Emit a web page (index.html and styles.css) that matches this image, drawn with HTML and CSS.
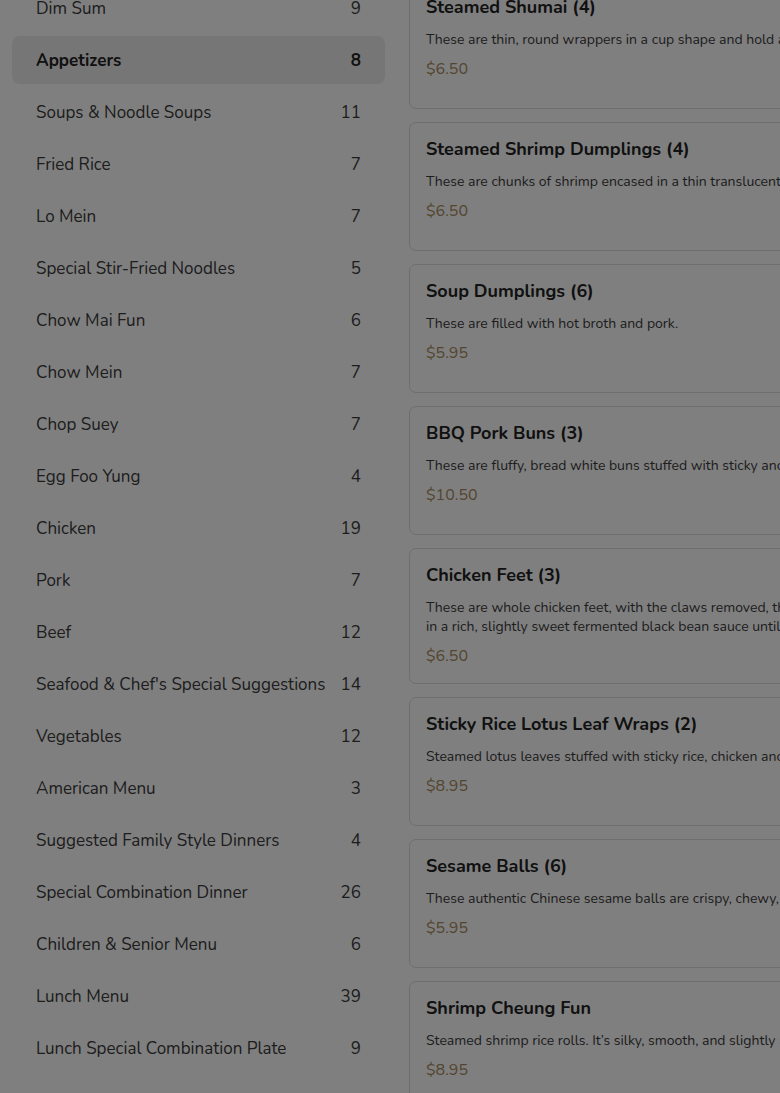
FILE: index.html
```html
<!DOCTYPE html>
<html lang="en">
<head>
<meta charset="utf-8">
<title>Menu</title>
<link rel="stylesheet" href="styles.css">
</head>
<body>
<div class="page">
  <nav class="sidebar">
    <div class="cat"><span class="cat-name">Dim Sum</span><span class="cat-count">9</span></div>
    <div class="cat active"><span class="cat-name">Appetizers</span><span class="cat-count">8</span></div>
    <div class="cat"><span class="cat-name">Soups &amp; Noodle Soups</span><span class="cat-count">11</span></div>
    <div class="cat"><span class="cat-name">Fried Rice</span><span class="cat-count">7</span></div>
    <div class="cat"><span class="cat-name">Lo Mein</span><span class="cat-count">7</span></div>
    <div class="cat"><span class="cat-name">Special Stir-Fried Noodles</span><span class="cat-count">5</span></div>
    <div class="cat"><span class="cat-name">Chow Mai Fun</span><span class="cat-count">6</span></div>
    <div class="cat"><span class="cat-name">Chow Mein</span><span class="cat-count">7</span></div>
    <div class="cat"><span class="cat-name">Chop Suey</span><span class="cat-count">7</span></div>
    <div class="cat"><span class="cat-name">Egg Foo Yung</span><span class="cat-count">4</span></div>
    <div class="cat"><span class="cat-name">Chicken</span><span class="cat-count">19</span></div>
    <div class="cat"><span class="cat-name">Pork</span><span class="cat-count">7</span></div>
    <div class="cat"><span class="cat-name">Beef</span><span class="cat-count">12</span></div>
    <div class="cat"><span class="cat-name">Seafood &amp; Chef's Special Suggestions</span><span class="cat-count">14</span></div>
    <div class="cat"><span class="cat-name">Vegetables</span><span class="cat-count">12</span></div>
    <div class="cat"><span class="cat-name">American Menu</span><span class="cat-count">3</span></div>
    <div class="cat"><span class="cat-name">Suggested Family Style Dinners</span><span class="cat-count">4</span></div>
    <div class="cat"><span class="cat-name">Special Combination Dinner</span><span class="cat-count">26</span></div>
    <div class="cat"><span class="cat-name">Children &amp; Senior Menu</span><span class="cat-count">6</span></div>
    <div class="cat"><span class="cat-name">Lunch Menu</span><span class="cat-count">39</span></div>
    <div class="cat"><span class="cat-name">Lunch Special Combination Plate</span><span class="cat-count">9</span></div>
    <div class="cat"><span class="cat-name">Lunch Special Salads</span><span class="cat-count">3</span></div>
  </nav>
  <main class="items">
    <div class="card">
      <h3 class="card-title">Steamed Shumai (4)</h3>
      <p class="card-desc">These are thin, round wrappers in a cup shape and hold a filling.</p>
      <div class="card-price">$6.50</div>
    </div>
    <div class="card">
      <h3 class="card-title">Steamed Shrimp Dumplings (4)</h3>
      <p class="card-desc">These are chunks of shrimp encased in a thin translucent wrapper.</p>
      <div class="card-price">$6.50</div>
    </div>
    <div class="card">
      <h3 class="card-title">Soup Dumplings (6)</h3>
      <p class="card-desc">These are filled with hot broth and pork.</p>
      <div class="card-price">$5.95</div>
    </div>
    <div class="card">
      <h3 class="card-title">BBQ Pork Buns (3)</h3>
      <p class="card-desc">These are fluffy, bread white buns stuffed with sticky and sweet pork.</p>
      <div class="card-price">$10.50</div>
    </div>
    <div class="card">
      <h3 class="card-title">Chicken Feet (3)</h3>
      <p class="card-desc">These are whole chicken feet, with the claws removed, that are fried, then stewed<br>in a rich, slightly sweet fermented black bean sauce until tender.</p>
      <div class="card-price">$6.50</div>
    </div>
    <div class="card">
      <h3 class="card-title">Sticky Rice Lotus Leaf Wraps (2)</h3>
      <p class="card-desc">Steamed lotus leaves stuffed with sticky rice, chicken and sausage.</p>
      <div class="card-price">$8.95</div>
    </div>
    <div class="card">
      <h3 class="card-title">Sesame Balls (6)</h3>
      <p class="card-desc">These authentic Chinese sesame balls are crispy, chewy, and sweet.</p>
      <div class="card-price">$5.95</div>
    </div>
    <div class="card">
      <h3 class="card-title">Shrimp Cheung Fun</h3>
      <p class="card-desc">Steamed shrimp rice rolls. It’s silky, smooth, and slightly sweet.</p>
      <div class="card-price">$8.95</div>
    </div>
  </main>
</div>
<div class="overlay"></div>
</body>
</html>
```
FILE: styles.css
```css
html, body {
  margin: 0;
  padding: 0;
  background: #ffffff;
  overflow: hidden;
  height: 100%;
}

body {
  font-family: "Nunito", "Lato", "Open Sans", sans-serif;
  color: #3a3a3a;
}

.page {
  display: flex;
  gap: 24px;
  padding: 0 12px;
  margin-top: -20px;
  width: 1100px;
}

.sidebar {
  width: 373px;
  flex: none;
  display: flex;
  flex-direction: column;
  gap: 4px;
  padding-top: 4px;
}

.cat {
  height: 48px;
  box-sizing: border-box;
  padding: 0 24px;
  display: flex;
  align-items: center;
  justify-content: space-between;
  border-radius: 8px;
  font-size: 17px;
  color: #3a3a3a;
}

.cat.active {
  background: #ececec;
  font-weight: 700;
  color: #222222;
}

.cat-count {
  flex: none;
}

.items {
  width: 562px;
  flex: none;
  display: flex;
  flex-direction: column;
  gap: 13px;
}

.card {
  box-sizing: border-box;
  min-height: 129px;
  border: 1px solid #dcdcdc;
  border-radius: 7px;
  padding: 14px 16px 16px;
}

.card-title {
  margin: 0;
  font-size: 18px;
  line-height: 24px;
  font-weight: 700;
  color: #222222;
  white-space: nowrap;
}

.card-desc {
  margin: 11px 0 0;
  font-size: 14px;
  line-height: 19px;
  color: #3a3a3a;
}

.card-price {
  margin-top: 9px;
  font-size: 16px;
  line-height: 22px;
  color: #a88b5e;
}

.overlay {
  position: fixed;
  inset: 0;
  background: rgba(0, 0, 0, 0.5);
}
```
